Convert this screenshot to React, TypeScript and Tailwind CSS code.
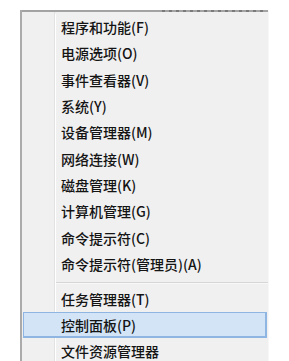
import React from "react";

type Item = { label: string; h: string };

const top: Item[] = [
  { label: "程序和功能(F)", h: "h-[26px]" },
  { label: "电源选项(O)", h: "h-[26px]" },
  { label: "事件查看器(V)", h: "h-[27px]" },
  { label: "系统(Y)", h: "h-[26px]" },
  { label: "设备管理器(M)", h: "h-[26px]" },
  { label: "网络连接(W)", h: "h-[27px]" },
  { label: "磁盘管理(K)", h: "h-[26px]" },
  { label: "计算机管理(G)", h: "h-[26px]" },
  { label: "命令提示符(C)", h: "h-[27px]" },
  { label: "命令提示符(管理员)(A)", h: "h-[26px]" },
];

function Row({ label, h }: Item) {
  return (
    <div className={`flex ${h}`}>
      <div className="w-[33px] shrink-0 border-r border-[#e2e2e2]" />
      <div className="w-px shrink-0 bg-white" />
      <div className="flex items-center pl-[5px] text-[14px] font-medium leading-none text-[#141414]">
        {label}
      </div>
    </div>
  );
}

export default function App() {
  return (
    <div
      className="w-[289px] h-[361px] overflow-hidden bg-white pt-[10px] pl-[20px]"
      style={{ fontFamily: '"Noto Sans CJK SC", "Noto Sans", sans-serif' }}
    >
      <div className="flex w-[249px] h-[400px] flex-col border-l-2 border-[#ababab] border-r border-r-[#f7f7f7] bg-[#f0f0f0]">
        <div className="flex h-[2px] shrink-0">
          <div className="w-[140px] bg-[#a3a3a3]" />
          <div className="w-[105px] bg-[repeating-linear-gradient(90deg,#7a7a7a_0_3px,#a3a3a3_3px_7px)]" />
          <div className="flex-1 bg-[#a3a3a3]" />
        </div>
        <div className="flex h-[2px] shrink-0">
          <div className="w-[33px] border-r border-[#e2e2e2]" />
        </div>
        {top.map((it) => (
          <Row key={it.label} {...it} />
        ))}
        <div className="flex h-[9px]">
          <div className="w-[33px] shrink-0 border-r border-[#e2e2e2]" />
          <div className="w-px shrink-0 bg-white" />
          <div className="flex flex-1 flex-col pt-[5px]">
            <div className="h-px bg-[#d6d6d6]" />
            <div className="h-px bg-[#f8f8f8]" />
          </div>
        </div>
        <Row label="任务管理器(T)" h="h-[26px]" />
        <div className="mx-px flex h-[26px] items-center border border-r-2 border-b-2 border-[#8fb5e2] bg-[#d2e4f6]">
          <div className="w-[32px] shrink-0" />
          <div className="pl-[5px] text-[14px] font-medium leading-none text-[#141414]">控制面板(P)</div>
        </div>
        <Row label="文件资源管理器" h="h-[26px]" />
        <div className="flex flex-1">
          <div className="w-[33px] shrink-0 border-r border-[#e2e2e2]" />
        </div>
      </div>
    </div>
  );
}
